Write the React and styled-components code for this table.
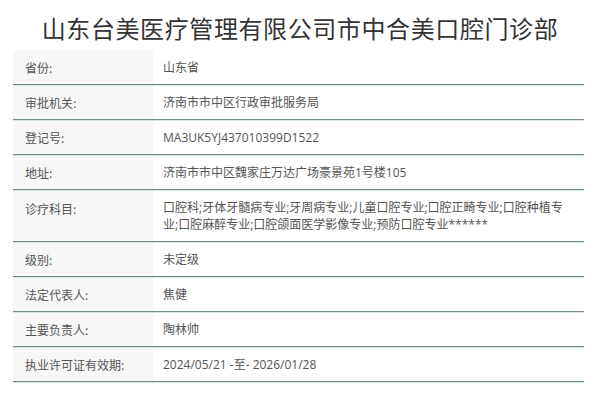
import React from "react";
import styled, { createGlobalStyle } from "styled-components";

const Global = createGlobalStyle`
  html, body { margin: 0; padding: 0; background: #fff; }
  body { font-family: "Open Sans", "Noto Sans CJK SC", sans-serif; }
`;

const Page = styled.div`
  width: 600px;
  height: 400px;
  overflow: hidden;
  background: #fff;
`;

const Title = styled.h1`
  margin: 0;
  height: 51px;
  display: flex;
  align-items: center;
  justify-content: center;
  font-family: "Noto Sans CJK SC", sans-serif;
  font-weight: 400;
  font-size: 24px;
  letter-spacing: 0.6px;
  color: #333;
  padding-top: 4px;
  box-sizing: border-box;
`;

const Table = styled.div`
  margin: 0 16px 0 13px;
  display: flex;
  flex-direction: column;
`;

const Row = styled.div`
  display: grid;
  grid-template-columns: 140px 1fr;
  border-bottom: 1px solid #6f8c80;
  box-shadow: 0 1px 0 #d4e6de;
  margin-bottom: 1px;
  min-height: 33px;
`;

const Label = styled.div`
  background: #f7f7f7;
  padding: ${(p) => (p.$tall ? "9px 12px" : "0 12px")};
  display: flex;
  align-items: ${(p) => (p.$tall ? "flex-start" : "center")};
  font-family: "Noto Sans CJK SC", sans-serif;
  font-size: 12px;
  color: #555;
`;

const Value = styled.div`
  padding: ${(p) => (p.$tall ? "8px 10px" : "0 10px")};
  display: flex;
  align-items: center;
  font-family: "Open Sans", "Noto Sans CJK SC", sans-serif;
  font-size: 12px;
  line-height: 17px;
  color: #555;
`;

const rows = [
  ["省份:", "山东省"],
  ["审批机关:", "济南市市中区行政审批服务局"],
  ["登记号:", "MA3UK5YJ437010399D1522"],
  ["地址:", "济南市市中区魏家庄万达广场豪景苑1号楼105"],
  [
    "诊疗科目:",
    "口腔科;牙体牙髓病专业;牙周病专业;儿童口腔专业;口腔正畸专业;口腔种植专业;口腔麻醉专业;口腔颌面医学影像专业;预防口腔专业******",
    true,
  ],
  ["级别:", "未定级"],
  ["法定代表人:", "焦健"],
  ["主要负责人:", "陶林帅"],
  ["执业许可证有效期:", "2024/05/21 -至- 2026/01/28"],
];

export default function App() {
  return (
    <Page>
      <Global />
      <Title>山东台美医疗管理有限公司市中合美口腔门诊部</Title>
      <Table>
        {rows.map(([l, v, tall]) => (
          <Row key={l}>
            <Label $tall={tall}>{l}</Label>
            <Value $tall={tall}>{v}</Value>
          </Row>
        ))}
      </Table>
    </Page>
  );
}
